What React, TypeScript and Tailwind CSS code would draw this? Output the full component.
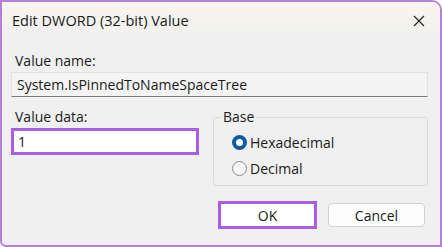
import React from "react";

// Win11-style "Edit DWORD" registry dialog
const Radio = ({ checked, label }: { checked?: boolean; label: string }) => (
  <label className="flex h-[26px] items-center">
    {checked ? (
      <span className="flex h-[15px] w-[15px] items-center justify-center rounded-full bg-[#0a5ca3]">
        <span className="h-[7px] w-[7px] rounded-full bg-white" />
      </span>
    ) : (
      <span className="h-[15px] w-[15px] rounded-full border border-[#8a8a8a] bg-[#f7f7f7]" />
    )}
    <span className="ml-[3px] text-[14px] text-[#1a1a1a]">{label}</span>
  </label>
);

const App = () => {
  return (
    <div
      className="flex h-[247px] w-[442px] flex-col overflow-hidden rounded-tr-[10px] rounded-bl-[6px] border-2 border-[#b77fdc] bg-[#f0f0f0] text-[#1a1a1a]"
      style={{ fontFamily: '"Open Sans", "Noto Sans", sans-serif' }}
    >
      {/* Title bar */}
      <div className="flex h-[38px] items-center justify-between bg-gradient-to-b from-[#f7f5ec] to-[#f0f0f0] pl-[10px] pr-[15px]">
        <span className="text-[14.5px]">Edit DWORD (32-bit) Value</span>
        <svg width="12" height="12" viewBox="0 0 12 12" className="text-[#222]">
          <path d="M1 1L11 11M11 1L1 11" stroke="currentColor" strokeWidth="1.1" />
        </svg>
      </div>

      <div className="flex flex-col px-[9px]">
        <div className="mt-[12px] pl-[4px] text-[14px] leading-[18px]">Value name:</div>
        <div className="mt-[2px] flex h-[25px] w-[417px] items-center border border-b-[#7a7a7a] border-[#e2e2e2] bg-[#f4f4f4] pl-[5px] text-[14px]">
          System.IsPinnedToNameSpaceTree
        </div>

        <div className="mt-[11px] flex">
          <div className="flex w-[188px] flex-col">
            <div className="pl-[4px] text-[14px] leading-[18px]">Value data:</div>
            <div className="mt-[2px] flex h-[27px] items-center border-[3px] border-[#a85fe3] bg-white pl-[4px] text-[14px]">
              1
            </div>
          </div>

          <fieldset className="ml-[14px] h-[78px] w-[215px] rounded-[3px] border border-[#dadada] pl-[7px] pt-[3px]">
            <legend className="px-[2px] text-[14px] leading-[18px]">Base</legend>
            <div className="pl-[11px]">
              <Radio checked label="Hexadecimal" />
              <Radio label="Decimal" />
            </div>
          </fieldset>
        </div>

        <div className="mt-[15px] flex items-center pl-[207px]">
          <button className="flex h-[28px] w-[99px] items-center justify-center border-[3px] border-[#a85fe3] bg-white text-[14px]">
            OK
          </button>
          <button className="ml-[11px] flex h-[24px] w-[97px] items-center justify-center rounded-[4px] border border-[#d2d2d2] bg-[#fdfdfd] text-[14px]">
            Cancel
          </button>
        </div>
      </div>
    </div>
  );
};

export default App;
